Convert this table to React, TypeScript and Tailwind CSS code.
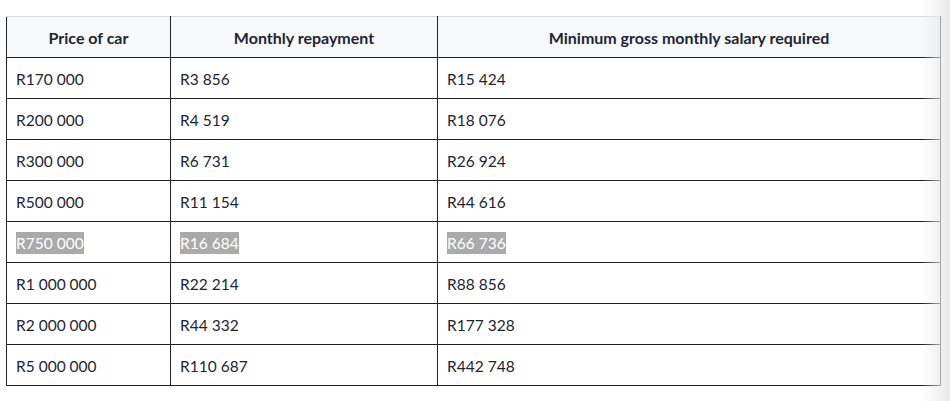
import React from "react";

const rows: [string, string, string, boolean?][] = [
  ["R170 000", "R3 856", "R15 424"],
  ["R200 000", "R4 519", "R18 076"],
  ["R300 000", "R6 731", "R26 924"],
  ["R500 000", "R11 154", "R44 616"],
  ["R750 000", "R16 684", "R66 736", true],
  ["R1 000 000", "R22 214", "R88 856"],
  ["R2 000 000", "R44 332", "R177 328"],
  ["R5 000 000", "R110 687", "R442 748"],
];

function Cell({ text, sel }: { text: string; sel?: boolean }) {
  return (
    <td className="h-[41px] border border-[#222222] pl-[9px] pr-2 pt-[3px] align-middle">
      {sel ? (
        <span className="bg-[#aaaaaa] py-[2px] text-white">{text}</span>
      ) : (
        text
      )}
    </td>
  );
}

export default function App() {
  return (
    <div
      className="relative h-[401px] w-[950px] overflow-hidden bg-white text-[15.5px] text-[#1d2535]"
      style={{ fontFamily: "Lato, 'Open Sans', sans-serif" }}
    >
      <div className="pl-[6px] pt-[16px]">
        <table className="w-[934px] table-fixed border-collapse">
          <colgroup>
            <col className="w-[164px]" />
            <col className="w-[267px]" />
            <col className="w-[503px]" />
          </colgroup>
          <thead>
            <tr className="bg-[#f7f8fa]">
              {["Price of car", "Monthly repayment", "Minimum gross monthly salary required"].map((h) => (
                <th
                  key={h}
                  className="h-[41px] border border-t-[#dddddd] border-x-[#222222] border-b-[#222222] pt-[2px] text-center align-middle text-[16px] font-bold text-[#1d2535]"
                >
                  {h}
                </th>
              ))}
            </tr>
          </thead>
          <tbody>
            {rows.map((r) => (
              <tr key={r[0]}>
                <Cell text={r[0]} sel={r[3]} />
                <Cell text={r[1]} sel={r[3]} />
                <Cell text={r[2]} sel={r[3]} />
              </tr>
            ))}
          </tbody>
        </table>
      </div>
      <div className="pointer-events-none absolute right-0 top-0 h-full w-[28px] bg-gradient-to-r from-white/0 to-[#e9e9e9]" />
    </div>
  );
}
